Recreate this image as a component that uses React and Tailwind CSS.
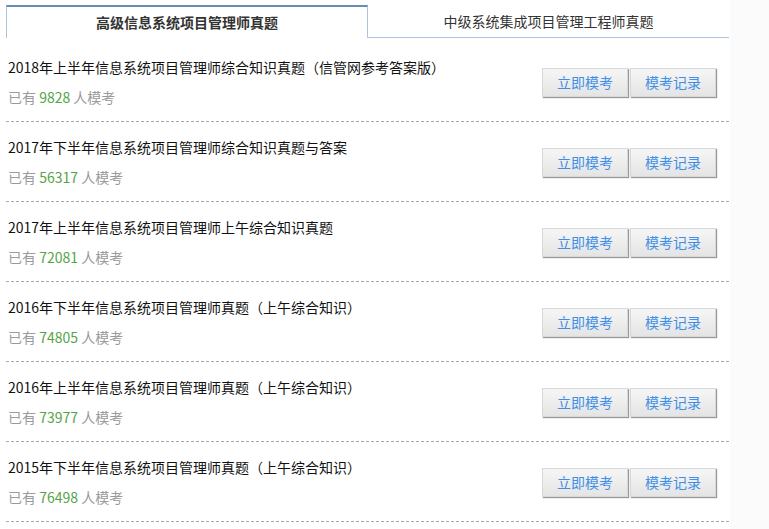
import React from "react";

const exams = [
    { title: "2018年上半年信息系统项目管理师综合知识真题（信管网参考答案版）", count: "9828" },
    { title: "2017年下半年信息系统项目管理师综合知识真题与答案", count: "56317" },
    { title: "2017年上半年信息系统项目管理师上午综合知识真题", count: "72081" },
    { title: "2016年下半年信息系统项目管理师真题（上午综合知识）", count: "74805" },
    { title: "2016年上半年信息系统项目管理师真题（上午综合知识）", count: "73977" },
    { title: "2015年下半年信息系统项目管理师真题（上午综合知识）", count: "76498" },
];

function ExamButton({ children }) {
    return (
        <button className="w-[86px] h-[29px] border border-[#d8d8d8] bg-gradient-to-b from-[#f6f6f6] to-[#e4e4e4] shadow-[1px_1px_1px_#9a9a9a] text-[14px] text-[#3f8fe8] leading-none">
            {children}
        </button>
    );
}

function ExamRow({ title, count }) {
    return (
        <div className="flex items-center border-b border-dashed border-[#a8a8a8] pt-[15px] pb-[14px]">
            <div className="flex-1 pl-[2px]">
                <div className="text-[14px] leading-[20px] text-[#111]">{title}</div>
                <div className="mt-[10px] text-[14px] leading-[20px] text-[#9a9a9a]">
                    已有 <span className="text-[#55a447]">{count}</span> 人模考
                </div>
            </div>
            <div className="flex gap-[2px] mr-[13px]">
                <ExamButton>立即模考</ExamButton>
                <ExamButton>模考记录</ExamButton>
            </div>
        </div>
    );
}

export default function App() {
    return (
        <div className="flex min-h-screen bg-white" style={{ fontFamily: '"Noto Sans CJK SC", "Noto Sans", sans-serif' }}>
            <div className="w-[730px] pl-[6px] pt-[5px] bg-white">
                <div className="w-[723px] flex h-[33px] mb-[4px]">
                    <div className="w-[362px] border-t-2 border-l border-r border-t-[#6a8cb3] border-l-[#aac4de] border-r-[#aac4de] flex items-center justify-center text-[14px] font-bold text-[#333]">
                        高级信息系统项目管理师真题
                    </div>
                    <div className="flex-1 border-b border-[#aac4de] flex items-center justify-center text-[14px] text-[#333]">
                        中级系统集成项目管理工程师真题
                    </div>
                </div>
                <div className="w-[723px]">
                    {exams.map((e) => (
                        <ExamRow key={e.count} title={e.title} count={e.count} />
                    ))}
                </div>
            </div>
            <div className="flex-1 bg-[#fbfbfb]" />
        </div>
    );
}
